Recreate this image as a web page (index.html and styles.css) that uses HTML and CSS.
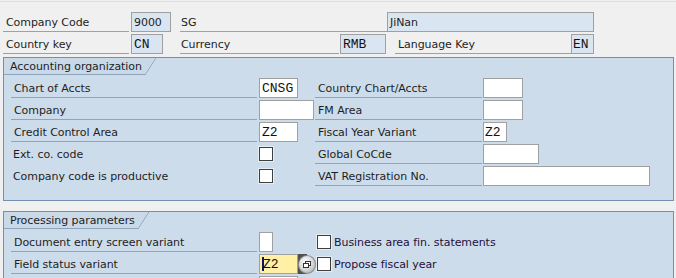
FILE: index.html
```html
<!DOCTYPE html>
<html lang="en">
<head>
<meta charset="UTF-8" />
<title>Company Code Global Data</title>
<link rel="stylesheet" href="styles.css">
</head>
<body>
<div class="screen">
  <div class="hdr">
    <div class="row">
      <span class="lbl w126">Company Code</span>
      <span class="fld ro code">9000</span>
      <span class="lbl w207 tight">SG</span>
      <span class="fld ro name">JiNan</span>
    </div>
    <div class="row">
      <span class="lbl w126">Country key</span>
      <span class="fld ro mono cn">CN</span>
      <span class="lbl cur tight">Currency</span>
      <span class="fld ro mono rmb">RMB</span>
      <span class="lbl lang">Language Key</span>
      <span class="fld ro mono en">EN</span>
    </div>
  </div>

  <div class="grp grp-acc">
    <div class="grp-head"><span class="tab">Accounting organization</span></div>
    <div class="grid acc">
      <span class="lbl">Chart of Accts</span>
      <span class="cell"><span class="fld mono w39">CNSG</span></span>
      <span class="lbl">Country Chart/Accts</span>
      <span class="cell"><span class="fld w40"></span></span>

      <span class="lbl">Company</span>
      <span class="cell"><span class="fld w55"></span></span>
      <span class="lbl">FM Area</span>
      <span class="cell"><span class="fld w40"></span></span>

      <span class="lbl">Credit Control Area</span>
      <span class="cell"><span class="fld mono w39">Z2</span></span>
      <span class="lbl">Fiscal Year Variant</span>
      <span class="cell"><span class="fld mono w24">Z2</span></span>

      <span class="lbl plain">Ext. co. code</span>
      <span class="cell"><span class="chk"></span></span>
      <span class="lbl">Global CoCde</span>
      <span class="cell"><span class="fld w56"></span></span>

      <span class="lbl plain">Company code is productive</span>
      <span class="cell"><span class="chk"></span></span>
      <span class="lbl">VAT Registration No.</span>
      <span class="cell"><span class="fld w167"></span></span>
    </div>
  </div>

  <div class="grp grp-proc">
    <div class="grp-head"><span class="tab">Processing parameters</span></div>
    <div class="grid proc">
      <span class="lbl">Document entry screen variant</span>
      <span class="cell"><span class="fld w14"></span></span>
      <span class="cell"><span class="chk"></span><span class="opt">Business area fin. statements</span></span>

      <span class="lbl">Field status variant</span>
      <span class="cell"><span class="fld mono w39 focus"><span class="caret"></span>Z2</span><span class="f4"><span class="f4-knob"><svg width="8" height="7" viewBox="0 0 8 7"><rect x="2.5" y="0.5" width="5" height="4" fill="#fff" stroke="#333"/><rect x="0.5" y="2.5" width="5" height="4" fill="#fff" stroke="#333"/></svg></span></span></span>
      <span class="cell"><span class="chk"></span><span class="opt">Propose fiscal year</span></span>

      <span class="lbl"></span>
      <span class="cell"><span class="fld w39"></span></span>
      <span class="cell"></span>
    </div>
  </div>
</div>
</body>
</html>
```

FILE: styles.css
```css
* {
  box-sizing: border-box;
}
body {
  margin: 0;
  background: #f0f0f0;
  font-family: 'DejaVu Sans', sans-serif;
  font-size: 11px;
  letter-spacing: -0.06px;
  color: #1e1e1e;
  overflow: hidden;
}
.screen {
  margin-top: 1px;
  border-top: 1px solid #d6e0ea;
  padding-top: 10px;
}
.hdr {
  display: flex;
  flex-direction: column;
  gap: 2px;
  padding-left: 3px;
}
.row {
  display: flex;
  height: 20px;
}
.lbl {
  display: block;
  height: 20px;
  line-height: 22px;
  padding-left: 3px;
  border-bottom: 1px solid #a0a0a0;
  white-space: nowrap;
}
.lbl.tight {
  padding-left: 1px;
}
.lbl.plain {
  border-bottom-color: transparent;
  padding-left: 2px;
}
.fld {
  display: block;
  height: 20px;
  line-height: 19px;
  padding: 0 2px;
  border: 1px solid #a0a0a0;
  background: #fff;
  white-space: nowrap;
}
.fld.ro {
  background: #dae5f2;
}
.mono {
  font-family: 'Liberation Mono', monospace;
  font-size: 13px;
  letter-spacing: 0;
  color: #111;
}
.w126 { width: 126px; }
.w207 { width: 207px; margin-left: 9px; }
.code { width: 40px; margin-left: 2px; }
.name { width: 207px; }
.cn { width: 32px; margin-left: 2px; }
.cur { width: 159px; margin-left: 17px; }
.rmb { width: 46px; margin-left: 1px; }
.lang { width: 176px; margin-left: 9px; }
.en { width: 23px; padding: 0 1px; }

/* group boxes */
.grp {
  margin-left: 3px;
  width: 671px;
  border: 1px solid #7390b2;
  background: #cddcea;
}
.grp-acc {
  margin-top: 3px;
  height: 144px;
}
.grp-proc {
  margin-top: 10px;
  height: 90px;
}
.grp-head {
  display: flex;
}
.tab {
  position: relative;
  display: block;
  height: 17px;
  line-height: 17px;
  padding: 0 3px 0 6px;
  border-bottom: 1px solid #8ea4bc;
  background: #c9d9e8;
  white-space: nowrap;
}
.tab::after {
  content: "";
  position: absolute;
  top: 0;
  right: -11px;
  width: 11px;
  height: 17px;
  background: linear-gradient(to bottom right, #c9d9e8 calc(50% - 0.7px), #8ea4bc 50%, transparent calc(50% + 0.7px));
}
.grid {
  display: grid;
  row-gap: 2px;
  margin-top: 3px;
  padding-left: 7px;
  grid-auto-rows: 20px;
}
.grid.acc {
  grid-template-columns: 248px 56px 168px auto;
}
.grid.proc {
  grid-template-columns: 248px 58px auto;
}
.grid .lbl {
  margin-right: 2px;
}
.grid.acc .lbl:nth-child(4n+3) {
  margin-right: 1px;
}
.cell {
  display: flex;
  align-items: flex-start;
}
.w14 { width: 14px; }
.w24 { width: 24px; padding: 0 1px; }
.w39 { width: 39px; }
.w40 { width: 40px; }
.w55 { width: 55px; }
.w56 { width: 56px; }
.w167 { width: 167px; }

.chk {
  display: block;
  width: 14px;
  height: 14px;
  margin-top: 3px;
  border: 1px solid #3f3f3f;
  background: #fff;
  box-shadow: 0 0 0 1px rgba(255,255,255,0.5);
}
.opt {
  line-height: 21px;
  margin-left: 3px;
  white-space: nowrap;
  color: #24103a;
}
.fld.focus {
  background: #fff0a6;
  display: flex;
  align-items: center;
}
.caret {
  display: block;
  width: 2px;
  height: 14px;
  margin-right: -1px;
  background: #14145a;
}
.f4 {
  display: flex;
  align-items: center;
  width: 18px;
  height: 20px;
  background: linear-gradient(to right, #4f4f4f 9px, transparent 9px);
}
.f4-knob {
  display: flex;
  align-items: center;
  justify-content: center;
  width: 18px;
  height: 19px;
  border-radius: 50%;
  border: 1px solid #8a8a8a;
  background: radial-gradient(circle at 40% 35%, #ffffff, #d4d4d4 55%, #9c9c9c);
}
```
